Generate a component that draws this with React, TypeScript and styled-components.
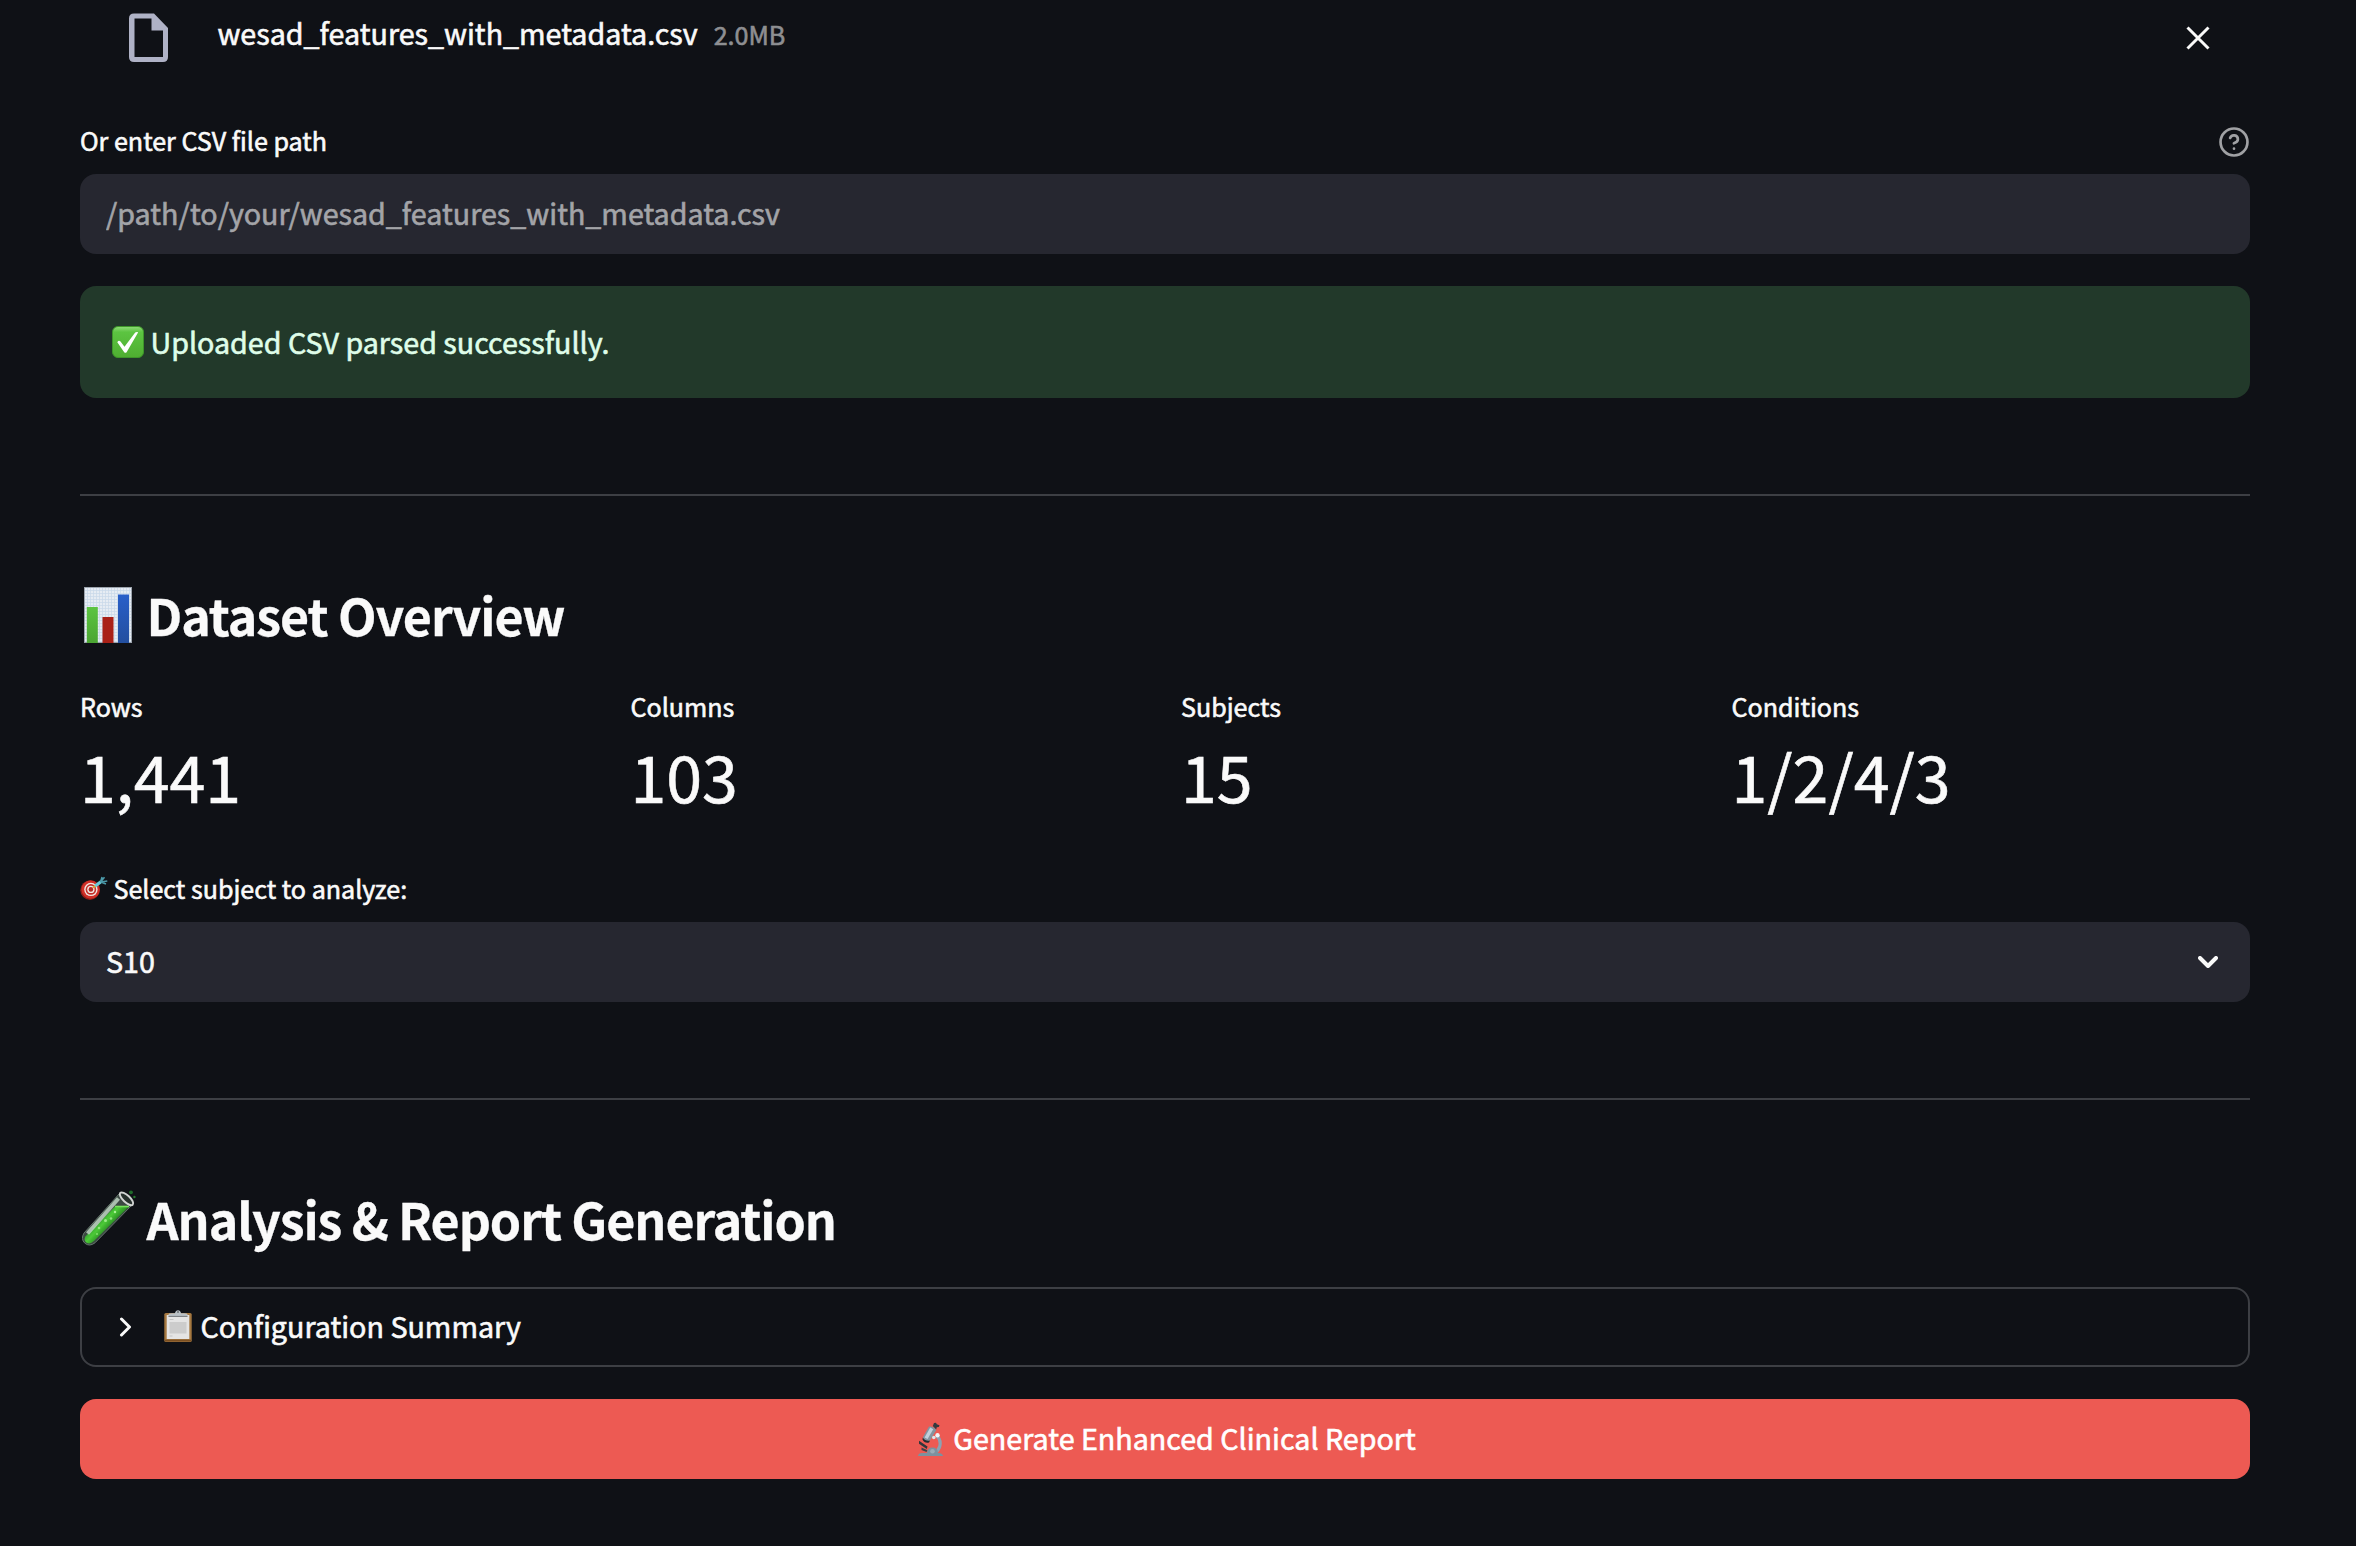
import React from 'react';
import styled, { createGlobalStyle } from 'styled-components';

const GlobalStyle = createGlobalStyle`
  * { box-sizing: border-box; }
  html, body { margin: 0; background: #0f1116; }
  body {
    color: #fafafa;
    font-family: "Noto Sans CJK SC", "Noto Sans", sans-serif;
    font-size: 28.66px;
    line-height: 48px;
    -webkit-text-stroke: 0.6px currentColor;
  }
`;

const Page = styled.main`
  height: 1546px;
  overflow: hidden;
  padding: 0 106px 0 80px;
  background: #0f1116;
`;

const FileRow = styled.div`
  display: flex;
  align-items: flex-start;
  height: 118px;
  padding: 9px 40px 0 44px;
`;

const FileIcon = styled.svg`
  width: 48px;
  height: 58px;
  flex: none;
`;

const FileName = styled.span`
  margin-left: 45.5px;
  white-space: nowrap;
`;

const FileSize = styled.span`
  margin-left: 16px;
  font-size: 25.08px;
  padding-top: 1px;
  color: #8e8f92;
`;

const CloseButton = styled.button`
  display: flex;
  margin: 17px 0 0 auto;
  padding: 0;
  border: 0;
  background: none;
  color: #fafafa;
`;

const FieldLabel = styled.div`
  display: flex;
  align-items: center;
  height: 48px;
  margin-bottom: 8px;
  font-size: 25.08px;
`;

const LabelText = styled.span`
  padding-bottom: 5px;
`;

const HelpIcon = styled.svg`
  width: 32px;
  height: 32px;
  margin-left: auto;
`;

const PathInput = styled.input`
  display: block;
  width: 100%;
  height: 80px;
  padding: 0 26px 4px;
  border: 0;
  border-radius: 16px;
  background: #262730;
  color: #fafafa;
  font: inherit;
  &::placeholder { color: #a3a4a8; opacity: 1; -webkit-text-stroke: 0.6px #a3a4a8; }
`;

const SuccessAlert = styled.div`
  display: flex;
  align-items: center;
  height: 112px;
  margin-top: 32px;
  padding: 0 32px 1px;
  border-radius: 16px;
  background: #22392a;
  color: #dffde9;
`;

const AlertText = styled.span`
  -webkit-text-stroke: 0.6px #dffde9;
`;

const Divider = styled.hr`
  height: 2px;
  margin: 96px 0 84px;
  border: 0;
  background: #3d3f44;
`;

const Heading = styled.h2`
  display: flex;
  align-items: center;
  height: 68px;
  margin: 0;
  font-size: 50.15px;
  line-height: 68px;
  font-weight: 700;
  letter-spacing: -0.0212em;
  -webkit-text-stroke: 0.3px currentColor;
`;

const Emoji = styled.svg<{ $w: number; $h: number; $left?: number; $gap: number; $shift?: number }>`
  flex: none;
  width: ${p => p.$w}px;
  height: ${p => p.$h}px;
  margin: ${p => p.$shift ?? 0}px ${p => p.$gap}px 0 ${p => p.$left ?? 0}px;
`;

const Metrics = styled.div`
  display: grid;
  grid-template-columns: repeat(4, 1fr);
  gap: 32px;
  margin-top: 34px;
`;

const MetricLabel = styled.div`
  height: 48px;
  font-size: 25.08px;
`;

const MetricValue = styled.div`
  height: 92px;
  font-size: 64.5px;
  line-height: 90px;
`;

const SelectBlock = styled.div`
  margin-top: 44px;
`;

const SelectBox = styled.div`
  display: flex;
  align-items: center;
  justify-content: space-between;
  height: 80px;
  padding: 0 32px 0 26px;
  border-radius: 16px;
  background: #262730;
`;

const Lifted = styled.span`
  padding-bottom: 2px;
  white-space: nowrap;
`;

const Expander = styled.div`
  display: flex;
  align-items: center;
  height: 80px;
  margin-top: 35px;
  padding: 0 36px;
  border: 2px solid #3d3f44;
  border-radius: 16px;
`;

const ExpanderArrow = styled.svg`
  width: 14px;
  height: 20px;
  margin-right: 32px;
`;

const PrimaryButton = styled.button`
  display: flex;
  align-items: center;
  justify-content: center;
  width: 100%;
  height: 80px;
  margin-top: 32px;
  border: 0;
  border-radius: 16px;
  background: #ed5a53;
  color: #fff;
  font: inherit;
  -webkit-text-stroke: 0.6px #fff;
`;

const CheckEmoji = () => (
  <Emoji $w={32} $h={32} $gap={6.5} viewBox="0 0 32 32">
    <defs>
      <linearGradient id="check" x1="0" y1="0" x2="0" y2="1">
        <stop offset="0" stopColor="#8fdc78" />
        <stop offset=".18" stopColor="#5cc441" />
        <stop offset="1" stopColor="#4fae31" />
      </linearGradient>
    </defs>
    <rect x=".5" y=".5" width="31" height="31" rx="5.5" fill="url(#check)" stroke="#3d9529" />
    <path d="M5.3 16.2q1.5-2.4 3.2-.6l4 5.1L23.2 6.6q1.2-1 3-.4L14.6 26.2q-1.2 1.2-2.4 0Z" fill="#fff" />
  </Emoji>
);

const ChartEmoji = () => (
  <Emoji $w={48} $h={56} $left={4} $gap={14.5} $shift={2} viewBox="0 0 48 56">
    <defs>
      <pattern id="grid" width="3" height="3" patternUnits="userSpaceOnUse">
        <rect width="3" height="3" fill="#e6ecf3" />
        <path d="M0 .5H3M.5 0V3" stroke="#c8d9ea" strokeWidth=".7" />
      </pattern>
      <linearGradient id="barGreen" x1="0" y1="0" x2="0" y2="1"><stop stopColor="#5cc441" /><stop offset="1" stopColor="#4ba532" /></linearGradient>
      <linearGradient id="barBlue" x1="0" y1="0" x2="0" y2="1"><stop stopColor="#285fc9" /><stop offset="1" stopColor="#234f9f" /></linearGradient>
    </defs>
    <rect x=".5" y=".5" width="47" height="55" fill="url(#grid)" stroke="#9ca4ad" />
    <rect x="2.8" y="20" width="11" height="36" fill="url(#barGreen)" />
    <rect x="18.5" y="30" width="11" height="26" fill="#a92118" />
    <rect x="34" y="7.5" width="11" height="48.5" fill="url(#barBlue)" />
  </Emoji>
);

const TargetEmoji = () => (
  <Emoji $w={28} $h={24} $gap={5.5} $shift={-4} viewBox="0 0 28 24">
    <circle cx="10" cy="14.2" r="9.7" fill="#8f1d17" />
    <circle cx="10.7" cy="13.5" r="9.2" fill="#cf2f27" />
    <circle cx="10.9" cy="13.4" r="6.7" fill="#f3e7e2" />
    <circle cx="10.9" cy="13.4" r="5.3" fill="#c5302a" />
    <circle cx="10.9" cy="13.4" r="3.7" fill="#f3e7e2" />
    <circle cx="10.9" cy="13.4" r="2.3" fill="#b52a25" />
    <path d="m13 11.7 3-2.4" stroke="#d9a637" strokeWidth="2" />
    <path d="m15.2 10 6-4.6" stroke="#68cbd8" strokeWidth="3.2" />
    <path d="m20.5 6 1.6-5M20.5 6l4-4.7M20.5 6l6.8-1M21 6l5 2" stroke="#4c9aaa" strokeWidth="1.6" />
  </Emoji>
);

const TubeEmoji = () => (
  <Emoji $w={54} $h={57} $left={2} $gap={10.5} viewBox="0 0 54 57">
    <defs>
      <linearGradient id="liquid" gradientUnits="userSpaceOnUse" x1="17" y1="24" x2="31" y2="37">
        <stop stopColor="#237d2c" />
        <stop offset=".5" stopColor="#4ccb37" />
        <stop offset="1" stopColor="#1f7a1e" />
      </linearGradient>
    </defs>
    <path d="M37.5 3.5 2 43Q-1.5 49 2.8 53.2 7.5 57 13 52.8L50.5 14.5Z" fill="#3b4842" stroke="#65776c" strokeWidth="1" />
    <path d="M33 16.5 3.3 46.5q-2 4 1.3 6.2 3.5 2 7.4-1.8L47 16.5Z" fill="url(#liquid)" />
    <path d="M36.5 8.5 5.5 43.5" stroke="#c6dccb" strokeWidth="4" opacity=".8" />
    <path d="M33 16.5H47" stroke="#76e45c" strokeWidth="1.6" />
    <ellipse cx="44.5" cy="8.8" rx="8.6" ry="3.4" transform="rotate(43 44.5 8.8)" fill="#26302c" stroke="#d1d4d2" strokeWidth="2" />
    <circle cx="33" cy="22" r="1.2" fill="#a9f296" />
    <circle cx="29" cy="28.5" r="1.3" fill="#8ee47c" />
    <circle cx="23.5" cy="30.5" r="1.5" fill="#9aec86" />
    <circle cx="17" cy="38" r="1.3" fill="#8ee47c" />
    <circle cx="15" cy="44" r="1.1" fill="#7ddd68" />
    <circle cx="49" cy="2.3" r="1.9" fill="#1f6b2a" />
    <circle cx="52.4" cy="7" r="1.2" fill="#257a2e" />
  </Emoji>
);

const ClipboardEmoji = () => (
  <Emoji $w={28} $h={32} $gap={8.5} $shift={-3} viewBox="0 0 28 32">
    <rect x=".3" y="3" width="27.4" height="29" rx="1.6" fill="#a57840" />
    <path d="M1 30.6h26" stroke="#7a4f22" strokeWidth="1.8" />
    <path d="M2.7 5h22.6v24H2.7Z" fill="#e4e4e4" />
    <path d="M5.5 9.5h4M5.5 26h3" stroke="#c4c4c4" strokeWidth="1" />
    <path d="M5.5 12h17v11.5h-17Z" fill="#cccccc" />
    <path d="M4.5 6.5V4.5Q4.5 3.2 8 3.2h2.8L12 1q2-1.5 4 0l1.2 2.2H20q3.5 0 3.5 1.3v2Z" fill="#b9c0c5" />
    <path d="M4.5 6.4h19" stroke="#74787b" strokeWidth="1" />
    <circle cx="14" cy="2" r=".9" fill="#656a6d" />
  </Emoji>
);

const MicroscopeEmoji = () => (
  <Emoji $w={25} $h={34} $left={4} $gap={10} $shift={-1} viewBox="0 0 25 34">
    <path d="M18.5 13.5q5 4.5 3.2 11Q20.5 28.5 17 30.5" fill="none" stroke="#8ba2b3" strokeWidth="3.2" />
    <path d="M1 18.8 9.5 24.5 8.8 27 1 21.8Z" fill="#30363b" />
    <path d="M3.5 25.5 9.5 28.3 8.5 30 3.5 28Z" fill="#3c444a" />
    <path d="M11 4.5Q15.5 3.8 18.3 8L12 18.5Q7 20 4.8 15.5Z" fill="#8494a0" />
    <path d="M12.3 5.6 15.2 7.2 9.6 17 6.6 15.5Z" fill="#c0d0da" />
    <path d="M4.8 15.5Q7.5 19.5 12 18.5L11 20.5Q6.5 21.5 4.5 17.5Z" fill="#272d31" />
    <path d="M14.8 4 16 1 18 .8 18.8 2.2 21.5 3.2 20.8 5 18.8 5.2 18.2 7.4Z" fill="#343a3f" />
    <circle cx="19.5" cy="13.2" r="2.2" fill="#f0f5f8" />
    <circle cx="15.8" cy="15.5" r="1.8" fill="#dce5eb" />
    <path d="M0 34q.3-2.8 4-3h5q.3-5.5 5.5-5.5T20 31q4.5.2 5 3Z" fill="#7c919f" />
    <circle cx="14.5" cy="29.2" r="2.3" fill="#9aabb6" />
  </Emoji>
);

const metrics = [
  ['Rows', '1,441'],
  ['Columns', '103'],
  ['Subjects', '15'],
  ['Conditions', '1/2/4/3'],
];

export default function App() {
  return (
    <>
      <GlobalStyle />
      <Page>
        <FileRow>
          <FileIcon viewBox="0 0 48 58" fill="none">
            <path fillRule="evenodd" d="M10 4.5H30L44 19V48Q44 53 39 53H10Q5 53 5 48V9.5Q5 4.5 10 4.5ZM10.5 9.5V48H39V21.5H27.5V9.5Z" fill="#afb2c6" />
          </FileIcon>
          <FileName>wesad_features_with_metadata.csv</FileName>
          <FileSize>2.0MB</FileSize>
          <CloseButton aria-label="Remove file">
            <svg width="24" height="24" viewBox="0 0 24 24" fill="none" stroke="currentColor" strokeWidth="3">
              <path d="M1.5 1.5l21 21M22.5 1.5l-21 21" />
            </svg>
          </CloseButton>
        </FileRow>

        <FieldLabel>
          <LabelText>Or enter CSV file path</LabelText>
          <HelpIcon viewBox="0 0 24 24" fill="none" stroke="#a0a1a4" strokeWidth="2" strokeLinecap="round" strokeLinejoin="round">
            <circle cx="12" cy="12" r="10.1" />
            <path d="M9.09 9a3 3 0 0 1 5.83 1c0 2-3 3-3 3" />
            <path d="M12 17h.01" />
          </HelpIcon>
        </FieldLabel>
        <PathInput placeholder="/path/to/your/wesad_features_with_metadata.csv" />

        <SuccessAlert>
          <CheckEmoji />
          <AlertText>Uploaded CSV parsed successfully.</AlertText>
        </SuccessAlert>

        <Divider />
        <Heading><ChartEmoji />Dataset Overview</Heading>
        <Metrics>
          {metrics.map(([label, value]) => (
            <div key={label}>
              <MetricLabel>{label}</MetricLabel>
              <MetricValue>{value}</MetricValue>
            </div>
          ))}
        </Metrics>

        <SelectBlock>
          <FieldLabel>
            <TargetEmoji />
            <LabelText>Select subject to analyze:</LabelText>
          </FieldLabel>
          <SelectBox>
            <Lifted>S10</Lifted>
            <svg width="20" height="12" viewBox="0 0 20 12" fill="none" stroke="#fafafa" strokeWidth="4" strokeLinecap="round" strokeLinejoin="round">
              <path d="M2 2l8 8 8-8" />
            </svg>
          </SelectBox>
        </SelectBlock>

        <Divider />
        <Heading><TubeEmoji />Analysis &amp; Report Generation</Heading>
        <Expander>
          <ExpanderArrow viewBox="0 0 14 20" fill="none" stroke="#fafafa" strokeWidth="3" strokeLinecap="round" strokeLinejoin="round">
            <path d="M3.5 2l8 8-8 8" />
          </ExpanderArrow>
          <ClipboardEmoji />
          <Lifted>Configuration Summary</Lifted>
        </Expander>
        <PrimaryButton>
          <MicroscopeEmoji />
          <Lifted>Generate Enhanced Clinical Report</Lifted>
        </PrimaryButton>
      </Page>
    </>
  );
}
